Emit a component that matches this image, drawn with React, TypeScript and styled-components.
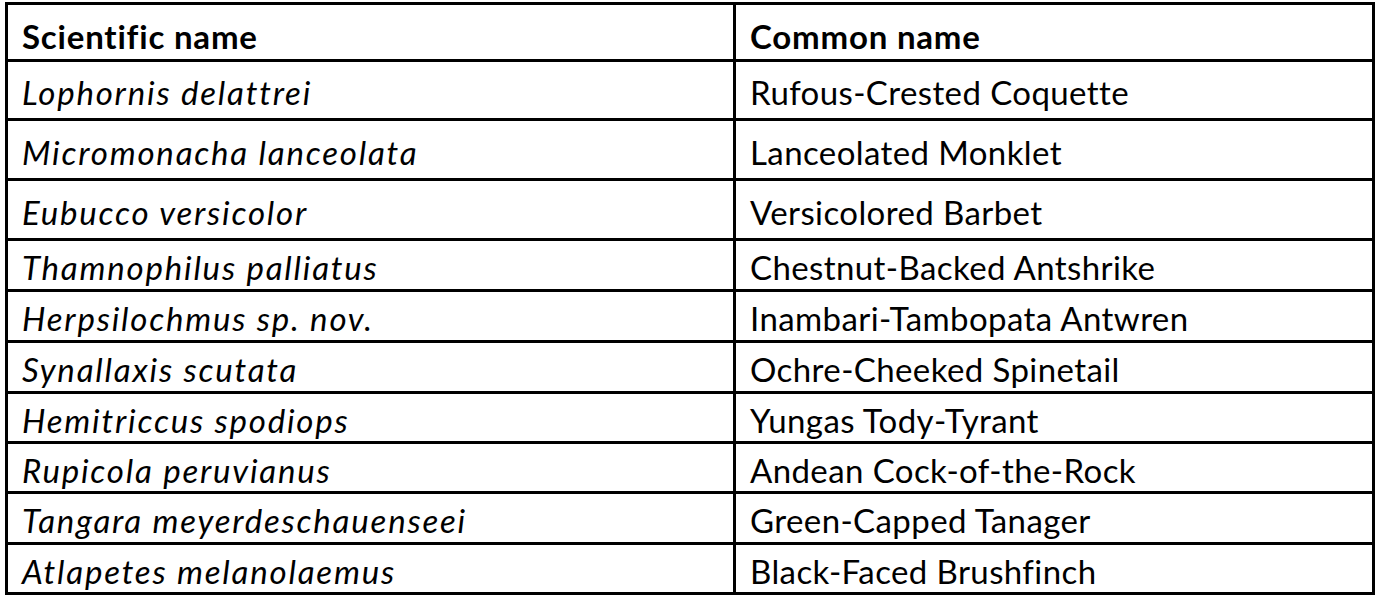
import React from 'react';
import styled, { createGlobalStyle } from 'styled-components';

interface Bird {
  scientific: string;
  common: string;
  height: number;
}

// 행 높이는 원본 표에서 잰 값 (px)
const birds: Bird[] = [
  { scientific: 'Lophornis delattrei', common: 'Rufous-Crested Coquette', height: 56 },
  { scientific: 'Micromonacha lanceolata', common: 'Lanceolated Monklet', height: 57 },
  { scientific: 'Eubucco versicolor', common: 'Versicolored Barbet', height: 57 },
  { scientific: 'Thamnophilus palliatus', common: 'Chestnut-Backed Antshrike', height: 48 },
  { scientific: 'Herpsilochmus sp. nov.', common: 'Inambari-Tambopata Antwren', height: 48 },
  { scientific: 'Synallaxis scutata', common: 'Ochre-Cheeked Spinetail', height: 48 },
  { scientific: 'Hemitriccus spodiops', common: 'Yungas Tody-Tyrant', height: 47 },
  { scientific: 'Rupicola peruvianus', common: 'Andean Cock-of-the-Rock', height: 47 },
  { scientific: 'Tangara meyerdeschauenseei', common: 'Green-Capped Tanager', height: 48 },
  { scientific: 'Atlapetes melanolaemus', common: 'Black-Faced Brushfinch', height: 47 },
];

const App: React.FC = () => {
  return (
    <>
      <GlobalStyle />
      <Page>
        <Table role="table">
          <Row role="row" $height={54}>
            <HeadCell role="columnheader">Scientific name</HeadCell>
            <HeadCell role="columnheader">Common name</HeadCell>
          </Row>
          {birds.map((bird) => (
            <Row role="row" key={bird.scientific} $height={bird.height}>
              <Cell role="cell" $italic>{bird.scientific}</Cell>
              <Cell role="cell">{bird.common}</Cell>
            </Row>
          ))}
        </Table>
      </Page>
    </>
  );
};

const GlobalStyle = createGlobalStyle`
  html, body {
    margin: 0;
    padding: 0;
    background: #fff;
  }
  body {
    font-family: Lato, "Open Sans", sans-serif;
    color: #000;
  }
`;

const Page = styled.div`
  padding: 2px 1px 0 5px;
`;

const Table = styled.div`
  width: 1370px;
  display: flex;
  flex-direction: column;
  gap: 3px;
  padding: 3px;
  box-sizing: border-box;
  background: #000;
`;

const Row = styled.div<{ $height: number }>`
  display: grid;
  grid-template-columns: 725px 1fr;
  gap: 3px;
  height: ${({ $height }) => $height}px;
`;

const Cell = styled.div<{ $italic?: boolean }>`
  background: #fff;
  display: flex;
  align-items: center;
  padding: 4px 0 0 14px;
  box-sizing: border-box;
  font-size: 33px;
  font-style: ${({ $italic }) => ($italic ? 'italic' : 'normal')};
  letter-spacing: ${({ $italic }) => ($italic ? '1.8px' : '0.4px')};
  white-space: nowrap;
  overflow: hidden;
`;

const HeadCell = styled(Cell)`
  font-weight: 700;
  letter-spacing: 0.8px;
  padding-top: 8px;
`;

export default App;
